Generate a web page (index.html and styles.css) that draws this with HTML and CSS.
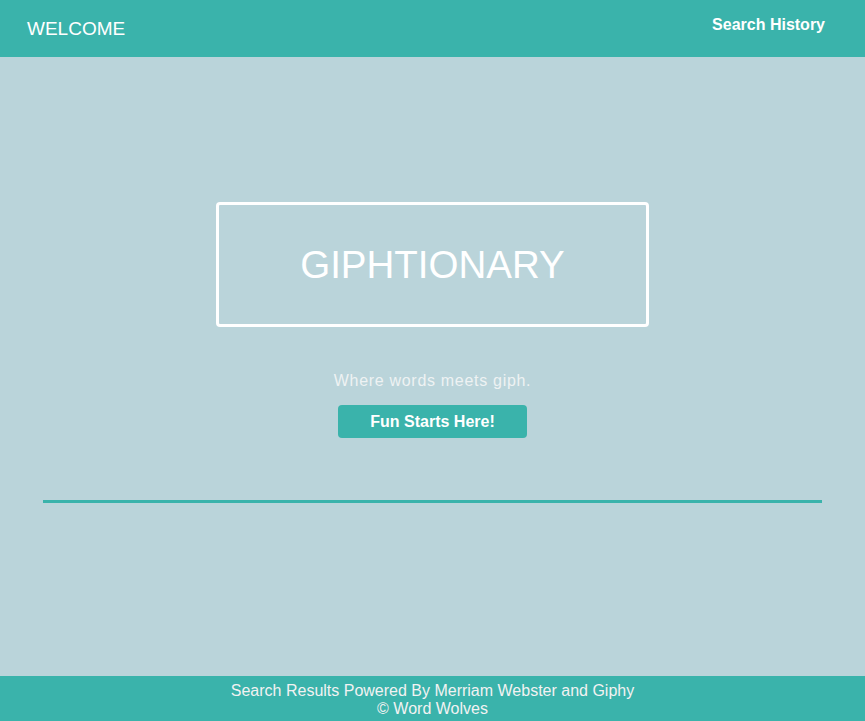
FILE: index.html
```html
<!DOCTYPE html>
<html>
<head>
<meta charset="utf-8">
<link rel="stylesheet" href="styles.css">
</head>
<body>
<div class="page">
  <header class="topbar">
    <div class="brand">WELCOME</div>
    <a class="history" href="#">Search History</a>
  </header>
  <main class="main">
    <div class="hero-box">
      <h1 class="title">GIPHTIONARY</h1>
    </div>
    <p class="tagline">Where words meets giph.</p>
    <button class="cta">Fun Starts Here!</button>
    <hr class="divider">
  </main>
  <footer class="footer">
    <div>Search Results Powered By Merriam Webster and Giphy</div>
    <div>© Word Wolves</div>
  </footer>
</div>
</body>
</html>
```
FILE: styles.css
```css
html, body {
  margin: 0;
  padding: 0;
  height: 100%;
}
body {
  font-family: "Liberation Sans", Arial, sans-serif;
  background: #bad4da;
}
.page {
  display: flex;
  flex-direction: column;
  min-height: 721px;
}
.topbar {
  height: 57px;
  background: #3ab3ab;
  display: flex;
  justify-content: space-between;
  align-items: flex-start;
  padding: 0 40px 0 27px;
  box-sizing: border-box;
}
.brand {
  color: #fff;
  font-size: 19px;
  line-height: 20px;
  margin-top: 19px;
}
.history {
  color: #fff;
  font-weight: bold;
  font-size: 16px;
  line-height: 18px;
  margin-top: 16px;
  text-decoration: none;
}
.main {
  flex: 1;
  display: flex;
  flex-direction: column;
  align-items: center;
  padding-top: 145px;
}
.hero-box {
  width: 433px;
  height: 125px;
  box-sizing: border-box;
  border: 3px solid #fff;
  border-radius: 4px;
  display: flex;
  align-items: center;
  justify-content: center;
}
.title {
  margin: 0;
  color: #fff;
  font-weight: normal;
  font-size: 38.5px;
  line-height: 40px;
}
.tagline {
  margin: 45px 0 0;
  color: #eef2f3;
  font-size: 16px;
  line-height: 18px;
  letter-spacing: 0.7px;
}
.cta {
  margin-top: 15px;
  width: 189px;
  height: 33px;
  border: none;
  border-radius: 4px;
  background: #3ab3ab;
  color: #fff;
  font-family: "Liberation Sans", Arial, sans-serif;
  font-weight: bold;
  font-size: 16px;
  padding: 0;
}
.divider {
  width: 779px;
  height: 3px;
  border: none;
  margin: 62px 0 0;
  background: #3ab3ab;
}
.footer {
  height: 45px;
  background: #3ab3ab;
  color: #f2f2f2;
  font-size: 16px;
  line-height: 18px;
  text-align: center;
  padding-top: 6px;
  box-sizing: border-box;
}
```
